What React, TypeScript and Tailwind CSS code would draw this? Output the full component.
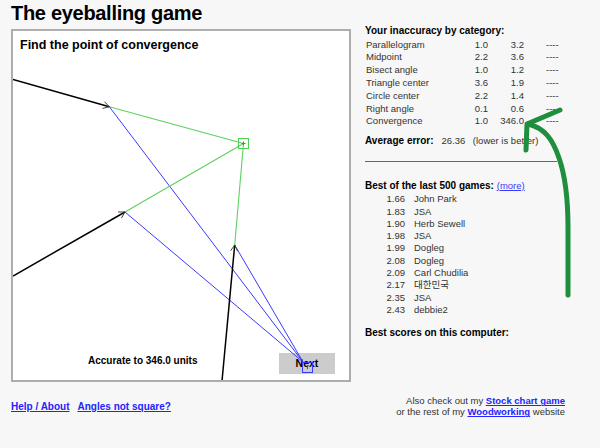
import React from "react";

function chevron(tx: number, ty: number, fx: number, fy: number, size = 6) {
  const dx = tx - fx;
  const dy = ty - fy;
  const len = Math.hypot(dx, dy);
  const ux = dx / len;
  const uy = dy / len;
  const a = Math.PI / 6;
  const p = (ang: number) => {
    const c = Math.cos(ang);
    const s = Math.sin(ang);
    const rx = ux * c - uy * s;
    const ry = ux * s + uy * c;
    return [tx - rx * size, ty - ry * size];
  };
  const [x1, y1] = p(a);
  const [x2, y2] = p(-a);
  return `M${x1},${y1} L${tx},${ty} L${x2},${y2}`;
}

const cats: [string, string, string, string][] = [
  ["Parallelogram", "1.0", "3.2", "----"],
  ["Midpoint", "2.2", "3.6", "----"],
  ["Bisect angle", "1.0", "1.2", "----"],
  ["Triangle center", "3.6", "1.9", "----"],
  ["Circle center", "2.2", "1.4", "----"],
  ["Right angle", "0.1", "0.6", "----"],
  ["Convergence", "1.0", "346.0", "----"],
];

const scores: [string, string][] = [
  ["1.66", "John Park"],
  ["1.83", "JSA"],
  ["1.90", "Herb Sewell"],
  ["1.98", "JSA"],
  ["1.99", "Dogleg"],
  ["2.08", "Dogleg"],
  ["2.09", "Carl Chudilia"],
  ["2.17", "대한민국"],
  ["2.35", "JSA"],
  ["2.43", "debbie2"],
];

const G = { x: 243.5, y: 143.5 };
const B = { x: 303, y: 362 };
const arrows = [
  { from: { x: 13, y: 79.4 }, to: { x: 109.3, y: 106.7 } },
  { from: { x: 13, y: 276 }, to: { x: 125, y: 212 } },
  { from: { x: 222, y: 381 }, to: { x: 234.7, y: 245 } },
];

export default function App() {
  return (
    <div className="relative w-[600px] h-[448px] bg-[#f7f7f7] flex overflow-hidden font-['Liberation_Sans','Noto_Sans_CJK_KR',sans-serif] text-[#222]">
      {/* Left column */}
      <div className="w-[365px] pl-[11px] flex flex-col shrink-0">
        <h1 className="pt-[1px] text-[20px] leading-[24px] font-bold tracking-[-0.3px] text-black">
          The eyeballing game
        </h1>
        <div className="mt-[4px] relative w-[340px] h-[353px] border-2 border-[#adadad] bg-white">
          <div className="absolute left-[7px] top-[7px] text-[12.5px] leading-[15px] font-bold text-black">
            Find the point of convergence
          </div>
          <div className="absolute left-[75px] top-[324px] text-[10px] leading-[12px] font-bold text-black">
            Accurate to 346.0 units
          </div>
          <div className="absolute left-[266px] top-[322px] w-[56px] h-[21px] bg-[#cccccc] flex items-center justify-center text-[10.5px] font-bold text-black pt-[1px]">
            Next
          </div>
          <svg
            className="absolute left-0 top-0"
            width={336}
            height={349}
            viewBox="13 31 336 349"
          >
            {arrows.map((a, i) => (
              <g key={i}>
                <line x1={a.to.x} y1={a.to.y} x2={G.x} y2={G.y} stroke="#5fd05f" strokeWidth={1.1} />
                <line x1={a.to.x} y1={a.to.y} x2={B.x} y2={B.y} stroke="#3a3aff" strokeWidth={1} />
                <line x1={a.from.x} y1={a.from.y} x2={a.to.x} y2={a.to.y} stroke="#000" strokeWidth={1.5} />
                <path d={chevron(a.to.x, a.to.y, a.from.x, a.from.y, 7)} fill="none" stroke="#444" strokeWidth={1} />
              </g>
            ))}
            <rect x={238.5} y={138.5} width={10} height={10} fill="none" stroke="#4fcf4f" strokeWidth={1} />
            <path d="M241.5,143.5 L245.5,143.5 M243.5,141.5 L243.5,145.5" stroke="#22aa22" strokeWidth={1} />
            <rect x={302.5} y={362.5} width={10} height={10} fill="none" stroke="#3a3aff" strokeWidth={1} />
            <path d="M307.5,366 L307.5,369" stroke="#3a3aff" strokeWidth={1} />
          </svg>
        </div>
        <div className="mt-[18px] flex gap-[8px] text-[10px] leading-[13px] font-bold">
          <a className="text-[#2323ff] underline">Help / About</a>
          <a className="text-[#2323ff] underline">Angles not square?</a>
        </div>
      </div>

      {/* Right column */}
      <div className="w-[200px] flex flex-col shrink-0">
        <div className="mt-[24px] text-[10px] leading-[13px] font-bold text-black">
          Your inaccuracy by category:
        </div>
        <div className="mt-[1.6px] text-[9.5px] leading-[12.8px] text-[#333]">
          {cats.map((r) => (
            <div key={r[0]} className="flex pl-[1px]">
              <div className="w-[98px]">{r[0]}</div>
              <div className="w-[24px] text-right">{r[1]}</div>
              <div className="w-[36px] text-right">{r[2]}</div>
              <div className="pl-[22px]">{r[3]}</div>
            </div>
          ))}
        </div>
        <div className="mt-[5.8px] flex items-baseline text-[10px] leading-[13px]">
          <span className="font-bold text-black">Average error:</span>
          <span className="ml-[8px] text-[9.5px] text-[#333]">26.36</span>
          <span className="ml-[7.5px] text-[9.5px] text-[#333]">(lower is better)</span>
        </div>
        <div className="mt-[14px] h-px w-[192px] bg-[#666]" />
        <div className="mt-[17px] text-[10px] leading-[13px] font-bold text-black">
          Best of the last 500 games:{" "}
          <a className="font-normal text-[9.5px] text-[#3a3aff] underline">(more)</a>
        </div>
        <div className="mt-[1.3px] text-[9.5px] leading-[12.3px] text-[#333]">
          {scores.map((s, i) => (
            <div key={i} className="flex">
              <div className="w-[40px] text-right">{s[0]}</div>
              <div className="ml-[9px]">{s[1]}</div>
            </div>
          ))}
        </div>
        <div className="mt-[9.7px] text-[10px] leading-[13px] font-bold text-black">
          Best scores on this computer:
        </div>
        <div className="mt-[56.5px] text-right text-[9.5px] leading-[11px] text-[#333]">
          <div>
            Also check out my{" "}
            <a className="font-bold text-[#2323ff] underline">Stock chart game</a>
          </div>
          <div>
            or the rest of my{" "}
            <a className="font-bold text-[#2323ff] underline">Woodworking</a> website
          </div>
        </div>
      </div>

      {/* Hand-drawn annotation arrow */}
      <svg className="absolute left-0 top-0 pointer-events-none" width={600} height={448} viewBox="0 0 600 448">
        <path
          d="M568,295 L568,228 C568,200 565,175 559,158 C553,140 545,128 528,124"
          fill="none"
          stroke="#1f8e3d"
          strokeWidth={5}
          strokeLinecap="round"
          strokeLinejoin="round"
        />
        <path
          d="M560,110 L527,124 L526,150"
          fill="none"
          stroke="#1f8e3d"
          strokeWidth={5}
          strokeLinecap="round"
          strokeLinejoin="round"
        />
      </svg>
    </div>
  );
}
